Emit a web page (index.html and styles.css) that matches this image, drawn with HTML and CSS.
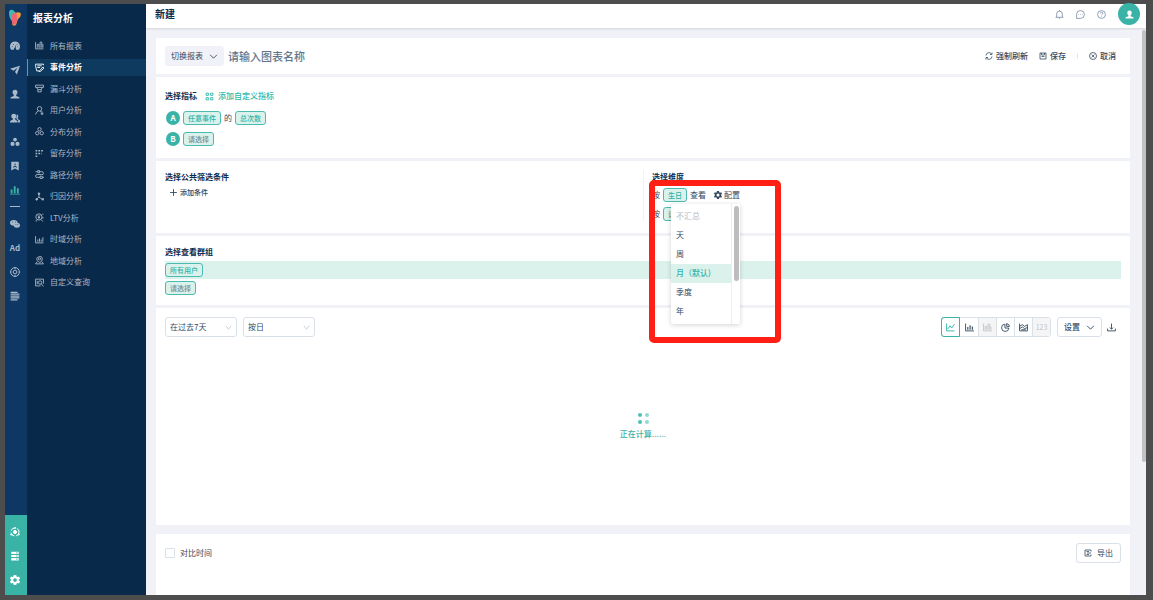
FILE: index.html
```html
<!DOCTYPE html>
<html lang="zh-CN">
<head>
    <meta charset="UTF-8">
    <meta name="viewport" content="width=device-width, initial-scale=1.0">
    <title>事件分析</title>
    <link rel="stylesheet" href="styles.css">
</head>
<body>
    <div class="app">
        <nav class="rail" aria-label="主菜单">
            <a href="#" class="logo" aria-label="首页">
                <svg viewBox="0 0 14 18"><path d="M1 4Q1 0 5 1L8 4 6 13Q1 11 1 4Z" fill="#43b8ae"/><path d="M7 4Q12 2 13 5 13 8 10 10L8 16Q5 18 4 15L7 10Z" fill="#f59b3c"/><path d="M4 7Q4 4 7 4 9 4 9 7V12Q8 16 6 16 3 14 4 9Z" fill="#ee6470"/></svg>
            </a>
            <a href="#" aria-label="概览"><svg viewBox="0 0 16 16"><path d="M2 14A8 8 0 1 1 14 14H10L9 11 10 5 8 10Q6 11 6 14Z"/><path d="M3 9h1M5 5l1 1M11 5l1 1M12 9h1" class="cut"/></svg></a>
            <a href="#" aria-label="运营"><svg viewBox="0 0 16 16"><path d="M0 6 16 1 11 15 8 11 12 4 6 9Z"/></svg></a>
            <a href="#" aria-label="用户"><svg viewBox="0 0 16 16"><path d="M8 1Q12 1 12 5 12 8 10 9V11L15 13V15H1V13L6 11V9Q4 8 4 5 4 1 8 1Z"/></svg></a>
            <a href="#" aria-label="用户群"><svg viewBox="0 0 16 16"><path d="M6 1Q10 1 10 5 10 8 8 9V10L12 13V15H0V13L5 10V9Q2 8 2 5 2 1 6 1Z"/><path d="M11 2Q14 3 13 7L12 9 16 12V15H13V12L10 9Z"/></svg></a>
            <a href="#" aria-label="分组"><svg viewBox="0 0 16 16"><circle cx="8" cy="4" r="3"/><circle cx="4" cy="11" r="3.3"/><circle cx="12" cy="11" r="3.3"/></svg></a>
            <a href="#" aria-label="标签"><svg viewBox="0 0 16 16"><path d="M2 1H14V15L8 12 2 15Z"/><path d="M5 10Q8 7 11 10M8 4v3" class="cut"/></svg></a>
            <a href="#" class="current" aria-label="报表"><svg viewBox="0 0 16 16"><path d="M1 7h3v6H1zM6 2h3v11H6zM11 5h3v8h-3zM0 14h16v1H0z"/></svg></a>
            <hr>
            <a href="#" aria-label="微信"><svg viewBox="0 0 16 16"><ellipse cx="6" cy="6" rx="6" ry="4.5"/><ellipse cx="11" cy="10" rx="5" ry="4"/><path d="M4 5h1M8 5h1M9 9h1M12 9h1" class="cut"/></svg></a>
            <a href="#" class="ad">Ad</a>
            <a href="#" aria-label="设备"><svg viewBox="0 0 16 16" class="line"><circle cx="8" cy="8" r="7"/><circle cx="8" cy="8" r="3"/><path d="M8 0v3M8 13v3M0 8h2M14 8h2"/></svg></a>
            <a href="#" aria-label="日志"><svg viewBox="0 0 16 16" class="line thick"><path d="M1 2h11M1 5h14M1 8h14M1 11h14M1 14h11"/></svg></a>
            <div class="rail-bottom">
                <a href="#" aria-label="账号"><svg viewBox="0 0 16 16" class="line"><circle cx="8" cy="8" r="6.5" stroke-dasharray="8 3"/><circle cx="8" cy="8" r="2.5" fill="currentColor"/><circle cx="2" cy="12" r="1"/><circle cx="14" cy="12" r="1"/><circle cx="8" cy="1.5" r="1"/></svg></a>
                <a href="#" aria-label="数据"><svg viewBox="0 0 16 16"><path d="M2 1h12v4H2zM2 6h12v4H2zM2 11h12v4H2z"/><path d="M10 3h2M10 8h2M10 13h2M1 5.500h14M1 10.500h14" class="cut"/></svg></a>
                <a href="#" aria-label="设置"><svg viewBox="0 0 16 16"><use href="#gear"/></svg></a>
            </div>
        </nav>

        <aside class="side">
            <h2>报表分析</h2>
            <ul class="menu">
                <li><a href="#"><svg viewBox="0 0 16 16"><path d="M1 2v12h14M4 12V6h3v6M9 12V2h3v10M14 5v7"/></svg>所有报表</a></li>
                <li class="active"><a href="#"><svg viewBox="0 0 16 16"><path d="M15 4V2H1v3l2 9h4M4 5h8M4 8h5M8 14l6-7 2 2-6 6H7z"/></svg>事件分析</a></li>
                <li><a href="#"><svg viewBox="0 0 16 16"><path d="M1 2h14v4H1zM3 6l2 4h6l2-4M5 10v4h6v-4"/></svg>漏斗分析</a></li>
                <li><a href="#"><svg viewBox="0 0 16 16"><circle cx="8" cy="5" r="4"/><path d="M6 9Q2 10 1 15M9 10l5 1M10 13h5M11 15h3"/></svg>用户分析</a></li>
                <li><a href="#"><svg viewBox="0 0 16 16"><circle cx="8" cy="4" r="3"/><circle cx="4" cy="11" r="3"/><circle cx="12" cy="11" r="3"/></svg>分布分析</a></li>
                <li><a href="#"><svg viewBox="0 0 16 16" class="dots"><path d="M1 3h3M6 3h3M11 3h3M1 8h3M6 8h3M1 13h3M11 8h1"/></svg>留存分析</a></li>
                <li><a href="#"><svg viewBox="0 0 16 16"><path d="M1 3h4M5 1h3v4H5zM8 3h4q3 0 3 3t-3 2H4q-3 0-3 3t3 2h5M9 11h4v4H9zM13 13h3"/></svg>路径分析</a></li>
                <li><a href="#"><svg viewBox="0 0 16 16"><path d="M7 3v6L3 13M7 9l6 4"/><g fill="currentColor"><circle cx="7" cy="3" r="1.500"/><circle cx="3" cy="13" r="1.500"/><circle cx="14" cy="13" r="1.500"/></g></svg>归因分析</a></li>
                <li><a href="#"><svg viewBox="0 0 16 16"><circle cx="7" cy="7" r="5.500"/><path d="M5 4l2 3 2-3M7 7v4M5 8h4M13 2h2M14 7v3M11 12l3 3M1 14h3"/></svg>LTV分析</a></li>
                <li><a href="#"><svg viewBox="0 0 16 16"><path d="M1 2v12h14M5 12V8M8 12V6M11 12V8M14 12V4"/></svg>时域分析</a></li>
                <li><a href="#"><svg viewBox="0 0 16 16"><path d="M8 12Q3 8 3 5t5-4 5 4-5 7zM4 10l-3 4h14l-3-4"/><circle cx="8" cy="5" r="2"/></svg>地域分析</a></li>
                <li><a href="#"><svg viewBox="0 0 16 16"><path d="M15 10V2H1v12h9M4 5v6"/><circle cx="9" cy="8" r="3"/><path d="M11 10l4 5"/></svg>自定义查询</a></li>
            </ul>
        </aside>

        <div class="main">
            <header class="topbar">
                <h1>新建</h1>
                <div class="top-icons">
                    <button aria-label="通知"><svg viewBox="0 0 16 16"><path d="M1 13h14M3 13V7q0-5 5-5t5 5v6M7 15h2M8 0v2"/></svg></button>
                    <button aria-label="消息"><svg viewBox="0 0 16 16"><path d="M1 15V8a7 7 0 1 1 7 7zM4 8h1M7.500 8h1M11 8h1"/></svg></button>
                    <button aria-label="帮助"><svg viewBox="0 0 16 16"><circle cx="8" cy="8" r="7"/><path d="M6 6q0-2 2-2t2 2-2 3M8 11v1"/></svg></button>
                    <button class="avatar" aria-label="我的账号"><svg viewBox="0 0 16 16"><path d="M8 1Q12 1 12 5 12 8 10 9V11L15 13V15H1V13L6 11V9Q4 8 4 5 4 1 8 1Z"/></svg></button>
                </div>
            </header>

            <div class="content">
                <section class="card title-card">
                    <button class="switch">切换报表<svg viewBox="0 0 16 16"><path d="M2 5l6 6 6-6"/></svg></button>
                    <input class="name" type="text" placeholder="请输入图表名称" aria-label="图表名称">
                    <div class="actions">
                        <button><svg viewBox="0 0 16 16"><path d="M2 7a6 6 0 0 1 11-3M14 9a6 6 0 0 1-11 3M14 1v4h-4M2 15v-4h4"/></svg>强制刷新</button>
                        <button><svg viewBox="0 0 16 16"><path d="M2 2h12v12H2zM5 2v4h6V2M5 9h6"/></svg>保存</button>
                        <span class="sep"></span>
                        <button><svg viewBox="0 0 16 16"><circle cx="8" cy="8" r="7"/><path d="M5 5l6 6M11 5l-6 6"/></svg>取消</button>
                    </div>
                </section>

                <section class="card metrics">
                    <div class="heading">
                        <h3>选择指标</h3>
                        <a href="#" class="add"><svg viewBox="0 0 16 16"><path d="M2 2h4v4H2zM10 2h4v4h-4zM2 10h4v4H2zM10 10h4v4h-4z"/></svg>添加自定义指标</a>
                    </div>
                    <div class="row"><span class="letter">A</span><button class="chip">任意事件</button><span>的</span><button class="chip">总次数</button></div>
                    <div class="row"><span class="letter">B</span><button class="chip empty">请选择</button></div>
                </section>

                <section class="card split">
                    <div class="filters">
                        <h3>选择公共筛选条件</h3>
                        <button class="add-filter"><svg viewBox="0 0 16 16"><path d="M8 2v12M2 8h12"/></svg>添加条件</button>
                    </div>
                    <div class="dims">
                        <h3>选择维度</h3>
                        <div class="row">
                            <span>按</span><button class="chip">生日</button><span>查看</span>
                            <button class="config"><svg viewBox="0 0 16 16"><path id="gear" fill-rule="evenodd" d="M6 0h4l.5 2.500 1.500.8L14.500 2.500l1.500 3-2 2v1l2 2-1.500 3-2.500-.8-1.500.8L10 16H6l-.5-2.500-1.500-.8-2.500.8-1.500-3 2-2v-1l-2-2 1.500-3 2.500.8 1.500-.8zM8 5a3 3 0 1 0 0 6 3 3 0 0 0 0-6z"/></svg>配置</button>
                        </div>
                        <div class="row"><span>按</span><button class="chip empty">请选择</button></div>
                        <div class="dropdown">
                            <div class="options" role="listbox" aria-label="汇总方式">
                                <button role="option" disabled>不汇总</button>
                                <button role="option">天</button>
                                <button role="option">周</button>
                                <button role="option" class="selected" aria-selected="true">月（默认)</button>
                                <button role="option">季度</button>
                                <button role="option">年</button>
                            </div>
                            <div class="track"><div class="thumb"></div></div>
                        </div>
                        <div class="marker"></div>
                    </div>
                </section>

                <section class="card groups">
                    <h3>选择查看群组</h3>
                    <div class="band"><button class="chip">所有用户</button></div>
                    <div class="band plain"><button class="chip empty">请选择</button></div>
                </section>

                <section class="card chart">
                    <div class="toolbar">
                        <label class="select">
                            <select aria-label="时间范围"><option>在过去7天</option></select>
                            <svg viewBox="0 0 16 16"><path d="M2 4l6 8 6-8"/></svg>
                        </label>
                        <label class="select">
                            <select aria-label="时间粒度"><option>按日</option></select>
                            <svg viewBox="0 0 16 16"><path d="M2 4l6 8 6-8"/></svg>
                        </label>
                        <div class="types">
                            <button class="on" aria-label="折线图"><svg viewBox="0 0 16 16"><path d="M1 1v13h14M3 11l4-6 3 4 5-7"/></svg></button>
                            <button aria-label="柱状图"><svg viewBox="0 0 16 16"><path d="M1 1v13h15"/><path class="bars" d="M5 12V7M9 12V4M13 12V6"/></svg></button>
                            <button disabled aria-label="堆积图"><svg viewBox="0 0 16 16"><path d="M1 1v13h15M4 12V6h3v6M9 12V2h3v10M14 6v6"/></svg></button>
                            <button aria-label="饼图"><svg viewBox="0 0 16 16"><path d="M7 2a6.500 6.500 0 1 0 7 7H7zM10 1v5h5q0-4-5-5z"/></svg></button>
                            <button aria-label="面积图"><svg viewBox="0 0 16 16"><path d="M1 1v13h14V3l-5 3-4-3-5 3M1 10l5-3 4 3 5-2M4 12h8"/></svg></button>
                            <button disabled>123</button>
                        </div>
                        <button class="settings">设置<svg viewBox="0 0 16 16"><path d="M2 5l6 6 6-6"/></svg></button>
                        <button class="download" aria-label="下载"><svg viewBox="0 0 16 16"><path d="M8 1v10M5 8l3 3 3-3M1 10v4h14v-4"/></svg></button>
                    </div>
                    <div class="loading">
                        <div class="spinner"><i></i><i></i><i></i><i></i></div>
                        <span>正在计算......</span>
                    </div>
                </section>

                <section class="card compare">
                    <label><input type="checkbox">对比时间</label>
                    <button class="export"><svg viewBox="0 0 16 16"><path d="M14 5V2H2v12h12v-3M6 8h8M5 5h5M5 11h5"/></svg>导出</button>
                </section>
            </div>
            <div class="page-scroll"></div>
        </div>
    </div>
</body>
</html>
```
FILE: styles.css
```css
* {
    box-sizing: border-box;
}
body {
    margin: 0;
    padding: 4px 7px 5px 5px;
    height: 100vh;
    background: #4d4d4d;
    color: #34495f;
    font-family: "Noto Sans CJK SC", sans-serif;
    font-size: 8px;
    line-height: 12px;
}
h1, h2, h3 {
    margin: 0;
    color: #0b2b4e;
    font-size: 8px;
    font-weight: 700;
}
a {
    color: inherit;
    text-decoration: none;
}
button, input, select {
    font: inherit;
    color: inherit;
    margin: 0;
    padding: 0;
    border: none;
    background: none;
}
button {
    display: flex;
    align-items: center;
    white-space: nowrap;
    cursor: pointer;
}
svg {
    width: 9px;
    height: 9px;
    flex: none;
    fill: none;
    stroke: currentColor;
    stroke-width: 1.6;
}
.app {
    display: flex;
    height: 100%;
}

/* icon rail */
.rail {
    width: 22px;
    flex: none;
    display: flex;
    flex-direction: column;
    background: #0e3863;
    color: #a9bacb;
}
.rail a {
    height: 24px;
    padding-right: 2px;
    display: flex;
    align-items: center;
    justify-content: center;
}
.rail svg {
    width: 10px;
    height: 10px;
    fill: currentColor;
    stroke: none;
}
.rail svg.line {
    fill: none;
    stroke: currentColor;
}
.rail svg.thick {
    stroke-width: 2;
}
.rail .cut {
    fill: none;
    stroke: #0e3863;
}
.rail .logo {
    height: 30px;
    padding-bottom: 2px;
}
.rail .logo svg {
    width: 14px;
    height: 18px;
}
.rail .current {
    color: #3ab3a7;
}
.rail hr {
    width: 10px;
    margin: 4px 7px 5px 5px;
    border: none;
    border-top: 1px solid #a9bacb;
}
.rail .ad {
    font-weight: 700;
}
.rail-bottom {
    margin-top: auto;
    padding: 5px 0 3px;
    background: #3ab3a7;
    color: #fff;
}
.rail-bottom .cut {
    stroke: #3ab3a7;
}

/* report menu */
.side {
    width: 119px;
    flex: none;
    background: #08294a;
    color: #a9b8c8;
}
.side h2 {
    padding: 6px 6px 0;
    height: 31px;
    line-height: 16px;
    font-size: 10px;
    color: #fff;
}
.menu {
    height: 258px;
    margin: 0;
    padding: 0;
    list-style: none;
    display: grid;
    grid-template-rows: repeat(12, 1fr);
    align-items: center;
}
.menu a {
    height: 17px;
    padding-left: 7px;
    border-left: 1px solid transparent;
    display: flex;
    align-items: center;
    gap: 6px;
}
.menu svg {
    stroke-width: 1.6;
}
.menu .dots {
    stroke-width: 2.6;
}
.menu .active a {
    background: #0e3a60;
    border-color: #3ab3a7;
    color: #fff;
    font-weight: 700;
}

/* main area */
.main {
    flex: 1;
    min-width: 0;
    display: flex;
    flex-direction: column;
    position: relative;
    background: #f1f2f7;
}
.topbar {
    height: 24px;
    flex: none;
    padding: 0 6px 4px 9px;
    display: flex;
    align-items: center;
    justify-content: space-between;
    background: #fff;
    box-shadow: 0 1px 2px rgba(0, 0, 0, 0.12);
}
.topbar h1 {
    font-size: 10px;
}
.top-icons {
    display: flex;
    align-items: center;
    gap: 12px;
    color: #6d7f99;
}
.top-icons svg {
    stroke-width: 1.3;
}
.top-icons .avatar {
    width: 22px;
    height: 22px;
    border-radius: 50%;
    justify-content: center;
    background: #3ab3a7;
    color: #fff;
}
.avatar svg {
    fill: currentColor;
    stroke: none;
}
.content {
    flex: 1;
    min-height: 0;
    padding: 10px 16px 0 10px;
    display: flex;
    flex-direction: column;
    gap: 3px;
}
.card {
    flex: none;
    padding: 9px;
    background: #fff;
}
.page-scroll {
    position: absolute;
    top: 26px;
    right: 0;
    width: 4px;
    height: 432px;
    border-radius: 2px;
    background: #c1c1c1;
}

.title-card {
    padding: 8px 14px 8px 9px;
    display: flex;
    align-items: center;
}
.switch {
    height: 20px;
    padding: 0 6px;
    gap: 6px;
    border-radius: 3px;
    background: #f1f2f7;
}
.name {
    flex: 1;
    min-width: 0;
    height: 20px;
    margin-left: 4px;
    font-size: 11px;
    font-weight: 500;
    outline: none;
}
.name::placeholder {
    color: #63748a;
}
.actions {
    display: flex;
    align-items: center;
    gap: 11px;
    font-weight: 500;
}
.actions button {
    gap: 3px;
}
.actions svg {
    width: 8px;
    height: 8px;
}
.sep {
    width: 1px;
    height: 6px;
    background: #e6e9ee;
}

.row {
    display: flex;
    align-items: center;
    gap: 3px;
}
.chip {
    height: 14px;
    padding: 0 4px;
    border: 1px solid #4bbab0;
    border-radius: 3px;
    background: #dbf1eb;
    color: #2fb3a7;
    font-size: 7px;
    font-weight: 500;
    line-height: 12px;
}
.chip.empty {
    color: #71909a;
}
.metrics {
    padding: 13px 9px 12px;
}
.heading {
    display: flex;
    gap: 8px;
}
.metrics .row {
    margin-top: 7px;
    padding-left: 1px;
}
.metrics .heading + .row {
    margin-top: 9px;
}
.add {
    display: flex;
    align-items: center;
    gap: 4px;
    color: #2fb8a8;
    font-weight: 500;
}
.letter {
    width: 14px;
    height: 14px;
    border-radius: 50%;
    background: #3ab3a7;
    color: #fff;
    font-weight: 700;
    line-height: 14px;
    text-align: center;
}

.split {
    padding: 9px 9px 12px;
    display: grid;
    grid-template-columns: 1fr 1fr;
}
.filters, .dims h3 {
    padding-top: 1px;
}
.add-filter {
    margin: 3px 0 0 4px;
    gap: 2px;
    font-size: 7px;
    font-weight: 500;
}
.dims {
    padding-left: 8px;
    border-left: 1px solid #f1f2f7;
    position: relative;
}
.dims .row {
    margin-top: 5px;
}
.config {
    margin-left: 5px;
    gap: 2px;
}
.config svg {
    fill: currentColor;
    stroke: none;
    width: 8px;
    height: 8px;
}
.dropdown {
    position: absolute;
    z-index: 2;
    top: 34px;
    left: 27px;
    width: 69px;
    padding: 3px 0;
    display: flex;
    background: #fff;
    border-radius: 2px;
    box-shadow: 0 1px 5px rgba(0, 0, 0, 0.18);
}
.options {
    flex: 1;
}
.options button {
    width: 100%;
    height: 19px;
    padding: 0 0 1px 5px;
}
.options button:disabled {
    color: #b4bac3;
}
.options .selected {
    background: #dbf1eb;
    color: #2fb3a7;
    font-weight: 500;
}
.track {
    width: 9px;
    margin: -3px 0;
    padding: 2px;
    border-left: 1px solid #eceef0;
}
.thumb {
    width: 5px;
    height: 75px;
    border-radius: 3px;
    background: #bdbdbd;
}
/* highlight frame round the dropdown */
.marker {
    position: absolute;
    z-index: 3;
    top: 10px;
    left: 5px;
    width: 132px;
    height: 163px;
    border: 6px solid #ff1f14;
    border-radius: 5px;
    pointer-events: none;
}

.groups {
    padding: 10px 9px 8px;
}
.band {
    margin-top: 3px;
    padding: 2px 0;
    background: #dbf1eb;
}
.band.plain {
    margin-top: 0;
    background: none;
}

.chart {
    min-height: 217px;
}
.toolbar {
    display: flex;
    align-items: center;
}
.select {
    width: 72px;
    height: 20px;
    margin-right: 6px;
    padding: 0 4px;
    display: flex;
    align-items: center;
    border: 1px solid #d9e0e7;
    border-radius: 3px;
}
.select select {
    flex: 1;
    min-width: 0;
    appearance: none;
    outline: none;
}
.select svg {
    width: 7px;
    height: 7px;
    color: #b9c1ca;
}
.types {
    margin-left: auto;
    display: flex;
    border: 1px solid #d9e0e7;
    border-radius: 3px;
}
.types button {
    width: 18px;
    height: 18px;
    justify-content: center;
    border-left: 1px solid #d9e0e7;
}
.types .on {
    width: 19px;
    height: 20px;
    margin: -1px 0 -1px -1px;
    border: 1px solid #3ab3a7;
    border-radius: 3px 0 0 3px;
    color: #2fb3a7;
}
.types .on + button {
    border-left: none;
}
.types button:disabled {
    background: #f5f5f5;
    color: #bfc3c8;
    font-size: 7px;
}
.bars {
    stroke-width: 2;
}
.settings {
    height: 20px;
    margin-left: 6px;
    padding: 0 6px;
    gap: 6px;
    border: 1px solid #d9e0e7;
    border-radius: 3px;
    font-weight: 500;
}
.download {
    margin: 0 5px;
}
.loading {
    margin-top: 76px;
    display: flex;
    flex-direction: column;
    align-items: center;
    gap: 4px;
    color: #3ab3a7;
    font-weight: 500;
}
.spinner {
    display: grid;
    grid-template-columns: 4px 4px;
    gap: 3px;
}
.spinner i {
    height: 4px;
    border-radius: 50%;
    background: #4fc0b5;
}
.spinner i:nth-child(even) {
    opacity: 0.6;
}

.compare {
    flex: 1;
    margin-top: 6px;
    display: flex;
    align-items: flex-start;
    justify-content: space-between;
}
.compare label {
    height: 20px;
    display: flex;
    align-items: center;
    gap: 5px;
}
.compare input {
    width: 10px;
    height: 10px;
    appearance: none;
    border: 1px solid #d9e0e7;
    border-radius: 1px;
}
.export {
    height: 20px;
    padding: 0 7px;
    gap: 5px;
    border: 1px solid #d9e0e7;
    border-radius: 3px;
}
.export svg {
    width: 8px;
    height: 8px;
}
```
